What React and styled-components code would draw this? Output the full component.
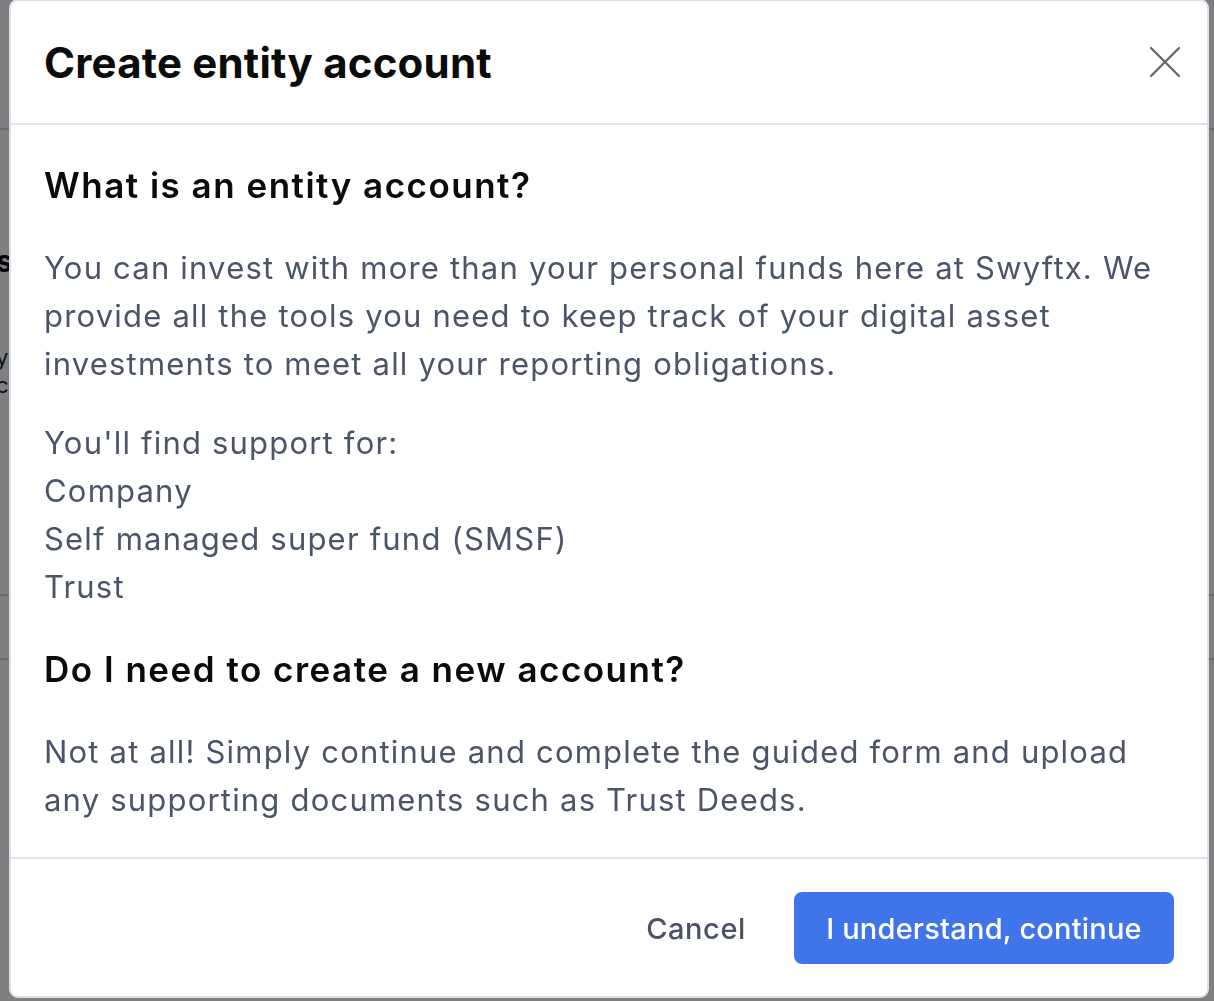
import React from "react";
import styled, { createGlobalStyle } from "styled-components";

const Global = createGlobalStyle`
  html, body { margin: 0; padding: 0; }
  body {
    width: 1214px;
    height: 1001px;
    overflow: hidden;
    background: #ffffff;
    font-family: Inter, "Open Sans", "Liberation Sans", sans-serif;
  }
`;

const Page = styled.div`
  display: flex;
  flex-direction: column;
  width: 1214px;
  height: 1001px;
  color: #111;
`;

const PageBar = styled.div`
  height: 128px;
  border-bottom: 2px solid #d9d9d9;
`;

const PageSection = styled.div`
  display: flex;
  flex-direction: column;
  padding: ${(p) => p.$pad || "0"};
  height: ${(p) => p.$h || "auto"};
  border-bottom: ${(p) => (p.$line ? "2px solid #d9d9d9" : "none")};
  margin-left: -4px;
`;

const PageHeading = styled.div`
  font-size: 30px;
  font-weight: 700;
  line-height: 40px;
`;

const PageSmall = styled.div`
  font-size: 22px;
  line-height: 28px;
  color: #222;
  margin-top: ${(p) => p.$top || "0"};
`;

const Overlay = styled.div`
  position: fixed;
  inset: 0;
  background: rgba(0, 0, 0, 0.5);
`;

const Dialog = styled.div`
  position: fixed;
  top: -1px;
  left: 9px;
  width: 1200px;
  box-sizing: border-box;
  background: #fff;
  border: 2px solid #d8e0ee;
  border-radius: 9px;
  display: flex;
  flex-direction: column;
`;

const Header = styled.div`
  height: 124px;
  box-sizing: border-box;
  display: flex;
  align-items: center;
  justify-content: space-between;
  padding: 0 20px 0 33px;
  border-bottom: 2px solid #dde4f1;
`;

const Title = styled.h1`
  margin: 0;
  font-size: 42px;
  font-weight: 700;
  letter-spacing: 0.2px;
  color: #0b0b0c;
`;

const CloseButton = styled.button`
  width: 44px;
  height: 44px;
  padding: 0;
  border: none;
  background: none;
  display: flex;
  align-items: center;
  justify-content: center;
  cursor: pointer;
`;

const Body = styled.div`
  display: flex;
  flex-direction: column;
  padding: 36px 33px 33px;
  border-bottom: 2px solid #dde4f1;
`;

const Heading = styled.h2`
  margin: 0 0 ${(p) => p.$after || "35px"};
  font-size: 35px;
  line-height: 48px;
  font-weight: 600;
  letter-spacing: 1.5px;
  color: #0b0b0c;
`;

const Para = styled.p`
  margin: 0 0 ${(p) => p.$after || "0"};
  font-size: 31px;
  line-height: 48px;
  font-weight: 400;
  letter-spacing: 1.2px;
  color: #4c5568;
`;

const Footer = styled.div`
  display: flex;
  justify-content: flex-end;
  align-items: center;
  gap: 24px;
  padding: 33px 33px 32px;
`;

const GhostButton = styled.button`
  height: 72px;
  padding: 0 24px;
  border: none;
  background: none;
  font-family: inherit;
  font-size: 29px;
  font-weight: 500;
  letter-spacing: 0.6px;
  color: #4b5264;
  cursor: pointer;
`;

const PrimaryButton = styled.button`
  height: 72px;
  width: 380px;
  border: none;
  border-radius: 8px;
  background: #4075ea;
  color: #fff;
  font-family: inherit;
  font-size: 29px;
  font-weight: 500;
  letter-spacing: 0.2px;
  cursor: pointer;
`;

export default function App() {
  return (
    <>
      <Global />
      <Page>
        <PageBar />
        <PageSection $pad="111px 0 0" $h="353px" $line>
          <PageHeading>s</PageHeading>
          <PageSmall $top="62px">y</PageSmall>
          <PageSmall>c</PageSmall>
        </PageSection>
        <PageSection $h="62px" $line />
      </Page>
      <Overlay />
      <Dialog role="dialog" aria-labelledby="dlg-title">
        <Header>
          <Title id="dlg-title">Create entity account</Title>
          <CloseButton aria-label="Close">
            <svg width="32" height="32" viewBox="0 0 32 32" fill="none">
              <path d="M2 2 L30 30 M30 2 L2 30" stroke="#646464" strokeWidth="2.2" strokeLinecap="round" />
            </svg>
          </CloseButton>
        </Header>
        <Body>
          <Heading>What is an entity account?</Heading>
          <Para $after="31px">
            You can invest with more than your personal funds here at Swyftx. We provide all the tools you need to keep track of your digital asset investments to meet all your reporting obligations.
          </Para>
          <Para $after="34px">
            You'll find support for:
            <br />
            Company
            <br />
            Self managed super fund (SMSF)
            <br />
            Trust
          </Para>
          <Heading>Do I need to create a new account?</Heading>
          <Para>
            Not at all! Simply continue and complete the guided form and upload any supporting documents such as Trust Deeds.
          </Para>
        </Body>
        <Footer>
          <GhostButton>Cancel</GhostButton>
          <PrimaryButton>I understand, continue</PrimaryButton>
        </Footer>
      </Dialog>
    </>
  );
}
